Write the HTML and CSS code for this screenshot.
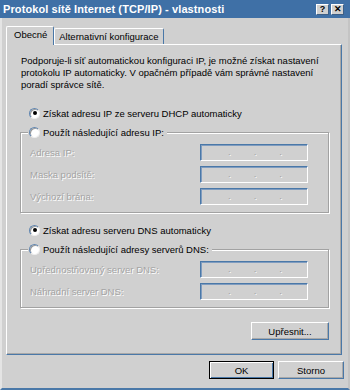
FILE: index.html
```html
<!DOCTYPE html>
<html lang="cs">
<head>
    <meta charset="UTF-8">
    <title>Protokol sítě Internet (TCP/IP) - vlastnosti</title>
    <link rel="stylesheet" href="styles.css">
</head>
<body>

<div class="window">
    <div class="titlebar">
        <span class="title">Protokol sítě Internet (TCP/IP) - vlastnosti</span>
        <span class="cap-btn">?</span>
        <span class="cap-btn">✕</span>
    </div>

    <div class="tabs">
        <div class="tab active">Obecné</div>
        <div class="tab">Alternativní konfigurace</div>
    </div>

    <div class="panel">
        <p class="intro">Podporuje-li síť automatickou konfiguraci IP, je možné získat nastavení protokolu IP automaticky. V opačném případě vám správné nastavení poradí správce sítě.</p>

        <label class="option first">
            <span class="radio checked"></span>
            <span>Získat adresu IP ze serveru DHCP automaticky</span>
        </label>

        <fieldset class="group">
            <legend class="option">
                <span class="radio"></span>
                <span>Použít následující adresu IP:</span>
            </legend>
            <div class="field">
                <span class="disabled">Adresa IP:</span>
                <span class="ip"><i>.</i><i>.</i><i>.</i></span>
            </div>
            <div class="field">
                <span class="disabled">Maska podsítě:</span>
                <span class="ip"><i>.</i><i>.</i><i>.</i></span>
            </div>
            <div class="field">
                <span class="disabled">Výchozí brána:</span>
                <span class="ip"><i>.</i><i>.</i><i>.</i></span>
            </div>
        </fieldset>

        <label class="option second">
            <span class="radio checked"></span>
            <span>Získat adresu serveru DNS automaticky</span>
        </label>

        <fieldset class="group">
            <legend class="option">
                <span class="radio"></span>
                <span>Použít následující adresy serverů DNS:</span>
            </legend>
            <div class="field">
                <span class="disabled">Upřednostňovaný server DNS:</span>
                <span class="ip"><i>.</i><i>.</i><i>.</i></span>
            </div>
            <div class="field">
                <span class="disabled">Náhradní server DNS:</span>
                <span class="ip"><i>.</i><i>.</i><i>.</i></span>
            </div>
        </fieldset>

        <div class="panel-actions">
            <button class="btn advanced">Upřesnit...</button>
        </div>
    </div>

    <div class="footer">
        <button class="btn default">OK</button>
        <button class="btn">Storno</button>
    </div>
</div>

</body>
</html>
```

FILE: styles.css
```css
body {
    margin: 0;
    background-color: #d0d0d0;
    font-family: "Liberation Sans", Arial, sans-serif;
    font-size: 9.5px;
    color: #000;
}
.window {
    width: 350px;
    height: 390px;
    box-sizing: border-box;
    border-left: 2px solid #e4e4e4;
    border-right: 2px solid #c4c4c4;
    border-bottom: 2px solid #4a78a8;
}
.titlebar {
    height: 18px;
    margin-left: -2px;
    margin-right: -2px;
    background-color: #3f70a6;
    display: flex;
    align-items: center;
    padding: 0 6px 0 3px;
}
.title {
    flex: 1;
    color: #fff;
    font-weight: bold;
    font-size: 11px;
    letter-spacing: 0.1px;
}
.cap-btn {
    width: 13px;
    height: 11px;
    margin-left: 2px;
    box-sizing: border-box;
    background-color: #d0d0d0;
    border: 1px solid;
    border-color: #fff #3d5f86 #3d5f86 #fff;
    font-size: 9px;
    font-weight: bold;
    line-height: 9px;
    text-align: center;
}
.tabs {
    display: flex;
    align-items: flex-end;
    height: 19px;
    margin-top: 7px;
    padding-left: 4px;
}
.tab {
    height: 16px;
    box-sizing: border-box;
    padding: 0 4px;
    border: 1px solid #fff;
    border-bottom: none;
    border-right-color: #4a78a8;
    border-radius: 2px 2px 0 0;
    line-height: 15px;
}
.tab.active {
    height: 19px;
    padding: 0 6px 0 7px;
    margin-bottom: -1px;
    position: relative;
    z-index: 1;
    background-color: #d0d0d0;
    line-height: 16px;
}
.panel {
    width: 336px;
    height: 311px;
    margin-left: 4px;
    box-sizing: border-box;
    border: 1px solid;
    border-color: #fff #4a78a8 #4a78a8 #fff;
    box-shadow: inset -1px -1px 0 #a8a8a8;
    padding: 10px 12px 0 13px;
}
.intro {
    margin: 0 0 0 1px;
    line-height: 12px;
}
.option {
    display: flex;
    align-items: center;
    gap: 3px;
    height: 14px;
}
.option.first {
    margin-top: 15px;
    padding-left: 9px;
}
.option.second {
    margin-top: 10px;
    padding-left: 9px;
}
.radio {
    width: 11px;
    height: 11px;
    box-sizing: border-box;
    border-radius: 50%;
    background-color: #fff;
    border: 1px solid;
    border-color: #5f84ae #eee #eee #5f84ae;
    box-shadow: inset 1px 1px 0 #9a9a9a;
    display: flex;
    align-items: center;
    justify-content: center;
}
.radio.checked::after {
    content: "";
    width: 4px;
    height: 4px;
    border-radius: 50%;
    background-color: #000;
}
.group {
    margin: 5px 0 0 0;
    padding: 5px 20px 7px 9px;
    border: 1px solid #a2a2a2;
    box-shadow: inset 1px 1px 0 #fff, 1px 1px 0 #fff;
    display: flex;
    flex-direction: column;
    gap: 5px;
}
.group legend {
    padding: 0 3px 0 1px;
    margin-left: -2px;
    background-color: #d0d0d0;
}
.field {
    display: flex;
    justify-content: space-between;
    align-items: center;
    height: 17px;
}
.disabled {
    color: #a4a4a4;
    text-shadow: 1px 1px 0 #fff;
}
.ip {
    width: 108px;
    height: 17px;
    box-sizing: border-box;
    border: 1px solid;
    border-color: #4a78a8 #fff #fff #4a78a8;
    box-shadow: inset 1px 1px 0 #7f9cbf;
    display: flex;
    justify-content: space-between;
    padding: 0 25px 0 27px;
    line-height: 14px;
}
.ip i {
    font-style: normal;
    color: #a4a4a4;
    text-shadow: 1px 1px 0 #fff;
}
.panel-actions {
    display: flex;
    justify-content: flex-end;
    margin-top: 14px;
}
.btn {
    height: 18px;
    box-sizing: border-box;
    background-color: #d0d0d0;
    border: 1px solid;
    border-color: #fff #4a78a8 #4a78a8 #fff;
    box-shadow: inset -1px -1px 0 #a8a8a8;
    font-family: inherit;
    font-size: 9.5px;
    color: #000;
    padding: 0;
}
.btn.advanced {
    width: 78px;
}
.footer {
    display: flex;
    justify-content: flex-end;
    gap: 4px;
    margin-top: 6px;
    padding-right: 4px;
}
.footer .btn {
    width: 66px;
}
.btn.default {
    width: 65px;
    border: 1px solid #000;
    box-shadow: inset 1px 1px 0 #fff, inset -1px -1px 0 #4a78a8;
}
```
